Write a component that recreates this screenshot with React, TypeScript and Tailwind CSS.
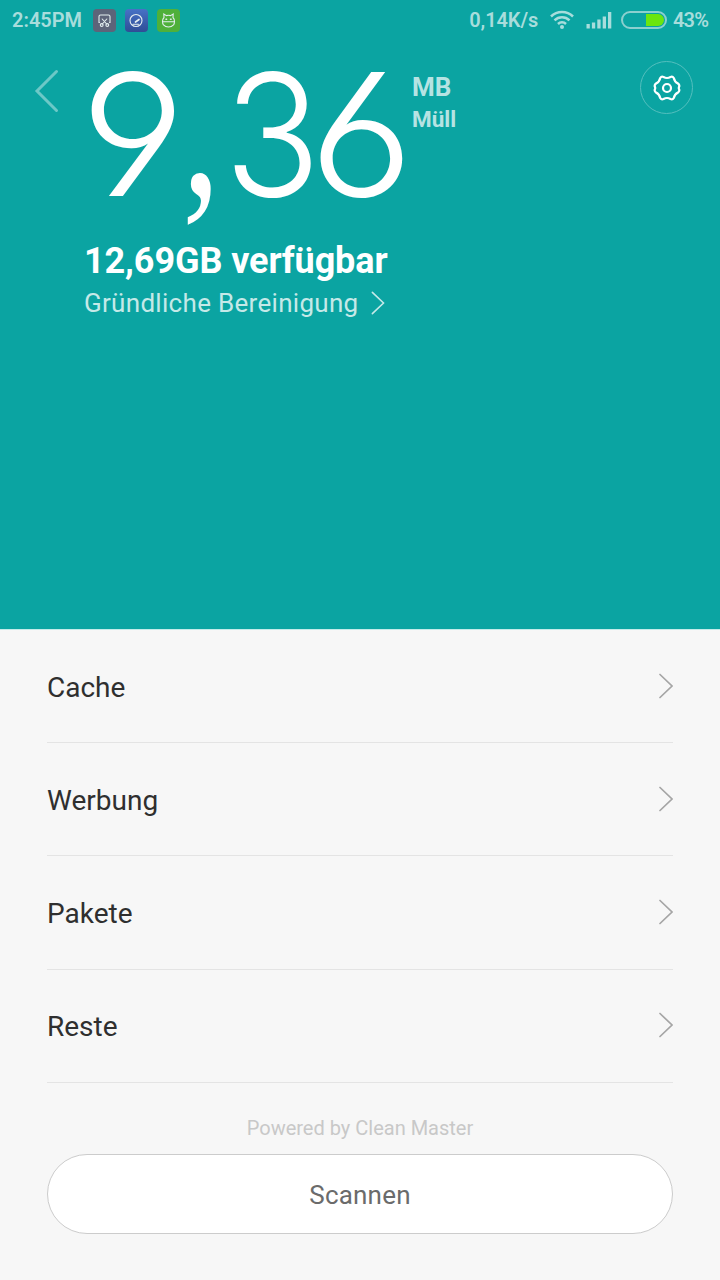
import type { ReactNode } from "react";

const ROWS = ["Cache", "Werbung", "Pakete", "Reste"];

function Chevron({ className }: { className?: string }) {
  return (
    <svg width="16" height="28" viewBox="0 0 16 28" fill="none" stroke="currentColor" strokeWidth="1.7" strokeLinecap="round" className={className}>
      <path d="M3 2.500 15 14 3 25.500" />
    </svg>
  );
}

function AppIcon({ className, children }: { className: string; children: ReactNode }) {
  return (
    <div className={`h-[23px] w-[23px] rounded-[4px] ${className}`}>
      <svg width="23" height="23" viewBox="0 0 23 23" fill="none" stroke="#e4eef0" strokeWidth="1.1" strokeLinecap="round">
        {children}
      </svg>
    </div>
  );
}

function StatusBar() {
  return (
    <div className="flex h-10 items-center pl-3 pr-3 text-[20px] font-semibold leading-10 text-[#a8dddc]">
      <span className="w-[81px] whitespace-nowrap">2:45PM</span>
      <div className="flex gap-[9px]">
        <AppIcon className="bg-[#5d6479]">
          <path d="M6.500 13.500H6V7.500q0-1.500 1.500-1.500h8q1.500 0 1.500 1.500v6h-.500M9.200 10l4.500 5M13.800 10l-4.500 5" />
          <circle cx="8.700" cy="16" r="1.400" />
          <circle cx="14.300" cy="16" r="1.400" />
        </AppIcon>
        <AppIcon className="bg-linear-to-b from-[#4772c6] to-[#2f4d96]">
          <circle cx="11" cy="11.500" r="6" />
          <path d="M10.500 13l3.500-2.500" strokeWidth="1.700" />
          <path d="M8 15.200h5.500" />
        </AppIcon>
        <AppIcon className="bg-[#4fb03a]">
          <path d="M5.500 12.800h12M7 8.500 6.800 5l2.700 1.600q2-.6 4 0L16.200 5 16 8.500q1.500 1.500 1.500 4 0 2-1 3.300Q14.500 18 11.500 18t-5-2.200q-1-1.300-1-3.300 0-2.500 1.500-4Z" />
          <path d="M9 10.200h.6M13.500 10.200h.6" strokeWidth="1.500" />
        </AppIcon>
      </div>
      <span className="ml-auto tracking-[-0.1px]">0,14K/s</span>
      <svg width="24" height="22" viewBox="0 0 24 22" fill="none" stroke="currentColor" strokeWidth="2.500" className="ml-3">
        <path d="M1 7.500a15.500 15.500 0 0 1 22 0M4.500 11.300a10.600 10.600 0 0 1 15 0M8 15a5.700 5.700 0 0 1 8 0" />
        <circle cx="12" cy="18" r="2" fill="currentColor" stroke="none" />
      </svg>
      <svg width="26" height="20" viewBox="0 0 26 20" fill="currentColor" className="ml-3">
        <path d="M.5 14h3.300v4.500H.5zM5.900 12.500h3.300v6H5.900zM11.300 9.500h3.300v9h-3.300zM16.700 6.500H20v12h-3.300zM22 2h3.300v16.500H22z" />
      </svg>
      <div className="ml-[9px] flex h-[18px] w-[46px] items-center justify-end rounded-full border-2 border-[#8bd0cf] p-[1px]">
        <div className="h-3 w-[18px] rounded-r-full bg-[#6be60f]" />
      </div>
      <span className="ml-1.5 tracking-[-0.9px]">43%</span>
    </div>
  );
}

export default function App() {
  return (
    <div className="flex h-[1280px] w-[720px] flex-col bg-[#f7f7f7] font-['Roboto',sans-serif]">
      <header className="h-[630px] border-b border-[#c4ecea] bg-[#0ba4a2]">
        <StatusBar />
        <div className="flex h-[200px] items-start">
          <svg width="26" height="44" viewBox="0 0 26 44" fill="none" stroke="#6cc8c7" strokeWidth="3" strokeLinecap="round" className="ml-[34px] mt-[29px]">
            <path d="M22.500 2.500 3 22l19.500 19.500" />
          </svg>
          <div className="ml-5 mt-0.5 flex h-[185px] w-[329px] font-['Inter',sans-serif] text-[170px] font-[265] leading-[185px] text-white [font-feature-settings:'cv03','cv04']">
            <span className="w-[102px] origin-left scale-x-[1.08]">9</span>
            <span className="w-[42px] origin-[0_130px] scale-x-[0.9] scale-y-[1.18] font-['Liberation_Serif',serif]">,</span>
            <span className="w-[85px] origin-left scale-x-[0.94] tracking-[-14px]">3</span>
            <span className="origin-left scale-x-[1.07]">6</span>
          </div>
          <div className="ml-[3px] mt-[31px] font-bold text-[#b6e3e3]">
            <div className="text-[26px] leading-8">MB</div>
            <div className="text-[22.500px] leading-[33px]">Müll</div>
          </div>
          <button className="ml-auto mr-[27px] mt-[21px] flex h-[53px] w-[53px] items-center justify-center rounded-full border border-[#54bfbe]">
            <svg width="28" height="28" viewBox="0 0 28 28" fill="none" stroke="white" strokeWidth="2.200" strokeLinejoin="round">
              <path d="M10.500 3Q14 5 17.500 3Q19.500 2 20.800 4Q21.500 7.800 25 9.500Q27 11 26 13Q25.600 14 26 15Q27 17 25 18.500Q21.500 20.200 20.800 24Q19.500 26 17.500 25Q14 23 10.500 25Q8.500 26 7.200 24Q6.500 20.200 3 18.500Q1 17 2 15Q2.400 14 2 13Q1 11 3 9.500Q6.500 7.800 7.200 4Q8.500 2 10.500 3Z" />
              <circle cx="14" cy="14" r="4" />
            </svg>
          </button>
        </div>
        <div className="pl-[84px]">
          <div className="text-[36px] font-bold leading-[42px] tracking-[-0.1px] text-white">12,69GB verfügbar</div>
          <div className="flex items-center text-[26px] leading-[42px] tracking-[0.300px] text-[#c5e9e8]">
            Gründliche Bereinigung
            <Chevron className="ml-[10px] h-[26px]" />
          </div>
        </div>
      </header>
      <ul className="mx-[47px] h-[453px]">
        {ROWS.map((row) => (
          <li key={row} className="flex h-[113.200px] items-center justify-between border-b border-[#e4e4e4] text-[28px] text-[#2f2f2f]">
            <span className="pt-[3px]">{row}</span>
            <Chevron className="mb-px text-[#a5a5a5]" />
          </li>
        ))}
      </ul>
      <div className="mt-[29px] text-center text-[20px] leading-8 text-[#c8c8c8]">Powered by Clean Master</div>
      <button className="mx-[47px] mt-[10px] h-20 rounded-full border border-[#cccccc] bg-white pt-0.5 text-[26px] tracking-[0.200px] text-[#6b6b6b]">Scannen</button>
    </div>
  );
}
